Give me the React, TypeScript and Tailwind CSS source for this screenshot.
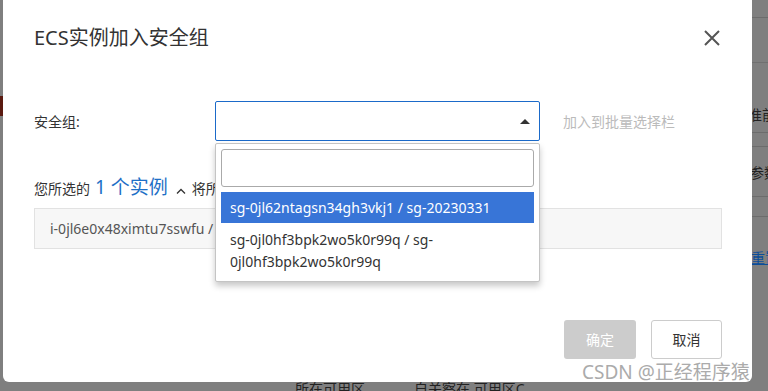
import React from "react";

const font = { fontFamily: '"Noto Sans", "Noto Sans CJK SC", sans-serif' };

export default function App() {
  return (
    <div
      className="relative w-[768px] h-[391px] overflow-hidden bg-[#7f7f7f] text-[#333]"
      style={font}
    >
      {/* background page (under overlay) */}
      <div className="absolute inset-0 flex">
        <div className="w-[3px] h-full relative">
          <div className="absolute left-0 top-[96px] w-[3px] h-[20px] bg-[#5a1a10]" />
        </div>
        <div className="flex-1" />
        <div className="w-[16px] h-full flex flex-col text-[14px] text-[#222] leading-none overflow-hidden">
          <div className="h-[18px] border-b border-[#6c6c6c] shrink-0" />
          <div className="h-[45px] border-b border-[#707070] shrink-0" />
          <div className="h-[70px] border-b border-[#6c6c6c] shrink-0 flex items-center whitespace-nowrap pt-[34px] -ml-[4px]">准前</div>
          <div className="h-[14px] border-b border-[#6c6c6c] shrink-0" />
          <div className="h-[50px] border-b border-[#6c6c6c] shrink-0 flex items-center whitespace-nowrap pt-[2px] -ml-[2px]">参数</div>
          <div className="h-[20px] border-b border-[#6c6c6c] shrink-0" />
          <div className="h-[60px] shrink-0 flex items-center whitespace-nowrap text-[#0b4d9a] underline -ml-[1px] pt-[22px]">重置</div>
        </div>
      </div>
      <div className="absolute left-[295px] top-[382px] text-[14px] leading-none text-[#222] whitespace-nowrap">所在可用区</div>
      <div className="absolute left-[414px] top-[382px] text-[14px] leading-none text-[#222] whitespace-nowrap">自关察在 可用区C</div>

      {/* modal */}
      <div className="absolute left-[3px] top-0 w-[749px] h-[382px] bg-white rounded-b-[6px] pl-[31px] pr-[30px]">
        <div className="flex items-center justify-between pt-[25px]">
          <div className="text-[20px] leading-[26px] text-[#333]">ECS实例加入安全组</div>
          <svg width="18" height="18" viewBox="0 0 18 18" className="mr-[1px]">
            <path d="M2 2 L16 16 M16 2 L2 16" stroke="#555" strokeWidth="2" strokeLinecap="butt" />
          </svg>
        </div>

        <div className="flex items-center mt-[50px] h-[40px]">
          <div className="w-[181px] text-[14px] text-[#333]">安全组:</div>
          <div className="w-[325px] h-[40px] border border-[#1b6ac9] rounded-[2px] flex items-center justify-end pr-[9px]">
            <svg width="10" height="6" viewBox="0 0 10 6">
              <path d="M0 6 L5 1 L10 6 Z" fill="#333" />
            </svg>
          </div>
          <div className="ml-[23px] text-[14px] text-[#bbb]">加入到批量选择栏</div>
        </div>

        <div className="flex items-baseline mt-[32px] h-[24px] text-[14px] text-[#333]">
          <span>您所选的</span>
          <span className="ml-[5px] text-[19px] text-[#1e6fc6]">1 个实例</span>
          <svg width="10" height="6" viewBox="0 0 10 6" className="ml-[8px] mr-[6px]">
            <path d="M1 5.5 L5 1.5 L9 5.5" stroke="#333" strokeWidth="1.3" fill="none" />
          </svg>
          <span>将所选实例加入安全组</span>
        </div>

        <div className="mt-[11px] h-[41px] bg-[#f7f7f7] border border-[#e2e2e2] flex items-center pl-[15px] text-[14px] text-[#555]">
          i-0jl6e0x48ximtu7sswfu / launch-advisor-20230331
        </div>

        <div className="flex justify-end gap-[15px] mt-[71px]">
          <div className="w-[72px] h-[39px] bg-[#cccccc] rounded-[3px] flex items-center justify-center text-[14px] text-white">确定</div>
          <div className="w-[71px] h-[39px] border border-[#cccccc] rounded-[3px] flex items-center justify-center text-[14px] text-[#333]">取消</div>
        </div>

        {/* dropdown */}
        <div className="absolute left-[212px] top-[143px] w-[325px] h-[139px] bg-white border border-[#c4c4c4] rounded-[2px] shadow-[0_4px_6px_rgba(0,0,0,0.22)] p-[5px]">
          <div className="h-[38px] border border-[#aaaaaa] rounded-[3px]" />
          <div className="mt-[5px] h-[31px] bg-[#3875d7] text-white text-[14px] flex items-center pl-[9px] whitespace-nowrap">
            sg-0jl62ntagsn34gh3vkj1 / sg-20230331
          </div>
          <div className="px-[9px] pt-[6px] text-[14px] leading-[22px] text-[#333]">
            sg-0jl0hf3bpk2wo5k0r99q / sg-
            <br />
            0jl0hf3bpk2wo5k0r99q
          </div>
        </div>
      </div>

      {/* watermark */}
      <div className="absolute left-[582px] top-[359px] text-[19px] leading-[26px] text-[#ababab] whitespace-nowrap [text-shadow:0_0_2px_#fff]">
        CSDN @正经程序猿
      </div>
    </div>
  );
}
